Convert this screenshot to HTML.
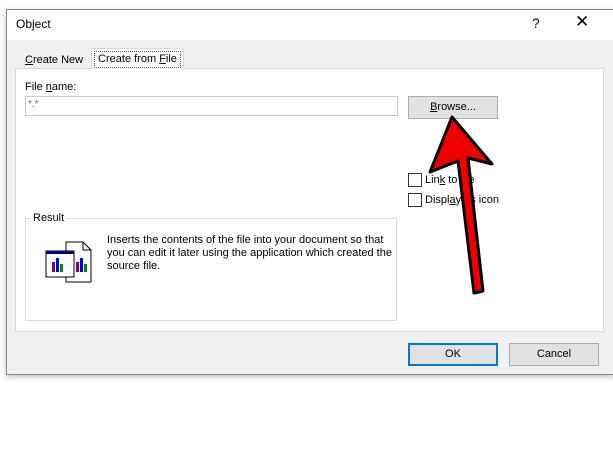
<html><head><style>
body{margin:0;width:613px;height:458px;background:#fff;font-family:"Liberation Sans",sans-serif;font-size:11px;color:#000;position:relative;overflow:hidden}
.a{position:absolute;white-space:nowrap}
.btn{position:absolute;background:#e1e1e1;border:1px solid #adadad;text-align:center;box-sizing:border-box}
.cb{position:absolute;width:12px;height:12px;border:1px solid #333;background:#fff}
</style></head><body>
<div class="a" style="left:6px;top:9px;width:606px;height:364px;background:#f0f0f0;border:1px solid #888;box-shadow:0 2px 6px rgba(0,0,0,.25)"></div>
<div class="a" style="left:7px;top:10px;width:606px;height:30px;background:#fff"></div>
<div class="a" style="left:16px;top:17px;font-size:12px">Object</div>
<div class="a" style="left:532px;top:15px;font-size:14px">?</div>
<div class="a" style="left:575px;top:12px;font-size:17px">✕</div>
<div class="a" style="left:15px;top:68px;width:589px;height:264px;background:#fff;border:1px solid #d9d9d9;box-sizing:border-box"></div>
<div class="a" style="left:25px;top:54px"><u>C</u>reate New</div>
<div class="a" style="left:91px;top:48px;width:93px;height:21px;background:#fff;border:1px solid #d9d9d9;border-bottom:none;box-sizing:border-box"><div style="position:absolute;left:2px;top:2px;right:2px;bottom:1px;border:1px dotted #555;line-height:15px;text-align:center">Create from <u>F</u>ile</div></div>
<div class="a" style="left:25px;top:81px">File <u>n</u>ame:</div>
<div class="a" style="left:25px;top:96px;width:373px;height:20px;border:1px solid #c8c8c8;box-sizing:border-box;padding:2px 2px;color:#666;font-size:10px">*.*</div>
<div class="btn" style="left:408px;top:96px;width:90px;height:23px;line-height:21px"><u>B</u>rowse...</div>
<div class="cb" style="left:408px;top:173px"></div>
<div class="a" style="left:425px;top:174px">Lin<u>k</u> to file</div>
<div class="cb" style="left:408px;top:193px"></div>
<div class="a" style="left:425px;top:194px">Displ<u>a</u>y as icon</div>
<div class="a" style="left:25px;top:218px;width:372px;height:103px;border:1px solid #dcdcdc;box-sizing:border-box"></div>
<div class="a" style="left:31px;top:212px;background:#fff;padding:0 2px">Result</div>
<div class="a" style="left:107px;top:234px;line-height:13px;width:285px;white-space:normal">Inserts the contents of the file into your document so that you can edit it later using the application which created the source file.</div>
<svg class="a" style="left:44px;top:240px" width="55" height="45">
<path d="M22 2h17l8 8v32H22z" fill="#fff" stroke="#000"/>
<path d="M39 2v8h8" fill="none" stroke="#000"/>
<rect x="2" y="11" width="28" height="26" fill="#fff" stroke="#000"/>
<rect x="2" y="11" width="28" height="3" fill="#000080"/>
<rect x="8" y="22" width="3" height="10" fill="#800080"/><rect x="12" y="18" width="3" height="14" fill="#00f"/><rect x="16" y="24" width="3" height="8" fill="#080"/>
<rect x="32" y="22" width="3" height="10" fill="#800080"/><rect x="36" y="18" width="3" height="14" fill="#00f"/><rect x="40" y="24" width="3" height="8" fill="#080"/>
</svg>
<div class="btn" style="left:408px;top:343px;width:90px;height:23px;line-height:19px;border:2px solid #0078d7">OK</div>
<div class="btn" style="left:509px;top:343px;width:90px;height:23px;line-height:21px">Cancel</div>
<svg class="a" style="left:0;top:0" width="613" height="458">
<path d="M452 117 L492 164 L468 158 L483 291 L474 293 L458 161 L430 172 Z" fill="#e00" stroke="#000" stroke-width="3" stroke-linejoin="round"/>
</svg>
</body></html>
